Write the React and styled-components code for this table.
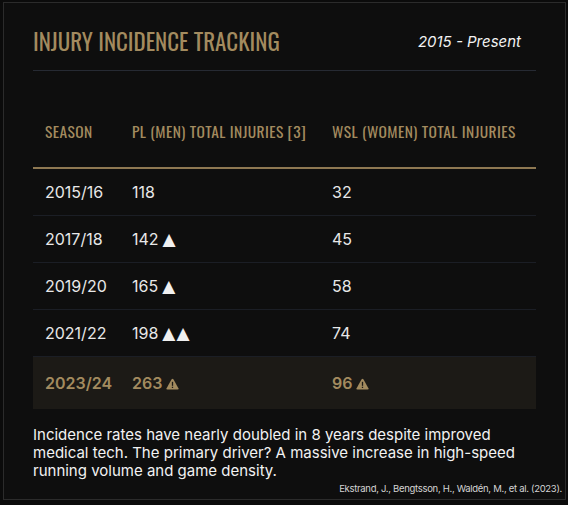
import React from "react";
import styled, { createGlobalStyle } from "styled-components";

const Global = createGlobalStyle`
  html, body { margin: 0; padding: 0; background: #0b0b0b; }
  body { font-family: Inter, "Noto Sans", sans-serif; }
`;

const Card = styled.section`
  box-sizing: border-box;
  width: 563px;
  height: 498px;
  margin: 2px 0 0 3px;
  background: #0e0e0e;
  border: 1px solid #2b2b2b;
  padding: 21px 29px 0 29px;
  display: flex;
  flex-direction: column;
`;

const Header = styled.header`
  display: flex;
  justify-content: space-between;
  align-items: center;
  padding: 0 15px 12px 0;
  border-bottom: 1px solid #262a33;
`;

const Title = styled.h2`
  margin: 0;
  font-family: Oswald, "Liberation Sans Narrow", sans-serif;
  font-weight: 400;
  font-size: 23px;
  line-height: 34px;
  color: #a38b5f;
  text-transform: uppercase;
`;

const Range = styled.span`
  font-family: Inter, sans-serif;
  font-style: italic;
  font-size: 15px;
  color: #f2f2f2;
`;

const Table = styled.table`
  width: 100%;
  margin-top: 24px;
  border-collapse: collapse;
  table-layout: fixed;
`;

const Th = styled.th`
  box-sizing: border-box;
  text-align: left;
  font-family: Oswald, "Liberation Sans Narrow", sans-serif;
  font-weight: 400;
  font-size: 15.5px;
  line-height: 22px;
  letter-spacing: 0.4px;
  color: #a38b5f;
  padding: 25px 12px 25px;
  border-bottom: 2px solid #8e7852;
  white-space: nowrap;
  width: ${(p) => (p.$w ? `${p.$w}px` : "auto")};
`;

const Tr = styled.tr`
  background: ${(p) => (p.$hl ? "#1c1a16" : "transparent")};
  border-bottom: 1px solid ${(p) => (p.$hl ? "transparent" : "#1b1e25")};
`;

const Td = styled.td`
  padding: 0 12px;
  height: ${(p) => (p.$hl ? 51 : 46)}px;
  font-size: 16px;
  color: ${(p) => (p.$hl ? "#a38b5f" : "#e8e8e8")};
  font-weight: ${(p) => (p.$hl ? 600 : 400)};
  white-space: nowrap;
`;

const Arrow = styled.span`
  font-family: "DejaVu Sans", sans-serif;
  font-size: 17px;
  margin-left: 4px;
  letter-spacing: 1px;
  color: #f0f0f0;
`;

const Warn = styled.svg`
  width: 13px;
  height: 12px;
  margin-left: 4px;
  vertical-align: -1px;
`;

const Note = styled.p`
  margin: 17px 0 0 0;
  font-size: 15px;
  line-height: 18px;
  color: #f2f2f2;
`;

const Cite = styled.p`
  margin: 3px -26px 0 0;
  text-align: right;
  font-size: 9.5px;
  letter-spacing: -0.3px;
  line-height: 12px;
  color: #d4d4d4;
`;

const WarnIcon = () => (
  <Warn viewBox="0 0 13 12">
    <path d="M5.6 1.3 Q6.5 0 7.4 1.3 L12.4 10.3 Q13 11.5 11.6 11.5 H1.4 Q0 11.5 0.6 10.3 Z" fill="#a38b5f" />
    <rect x="5.85" y="3.8" width="1.3" height="4" fill="#1c1a16" />
    <rect x="5.85" y="8.7" width="1.3" height="1.3" fill="#1c1a16" />
  </Warn>
);

const rows = [
  ["2015/16", "118", "", "32"],
  ["2017/18", "142", "▲", "45"],
  ["2019/20", "165", "▲", "58"],
  ["2021/22", "198", "▲▲", "74"],
];

export default function App() {
  return (
    <>
      <Global />
      <Card>
        <Header>
          <Title>Injury Incidence Tracking</Title>
          <Range>2015 - Present</Range>
        </Header>
        <Table>
          <thead>
            <tr>
              <Th $w={87}>SEASON</Th>
              <Th $w={200}>PL (MEN) TOTAL INJURIES [3]</Th>
              <Th>WSL (WOMEN) TOTAL INJURIES</Th>
            </tr>
          </thead>
          <tbody>
            {rows.map(([s, m, a, w]) => (
              <Tr key={s}>
                <Td>{s}</Td>
                <Td>
                  {m}
                  {a && <Arrow>{a}</Arrow>}
                </Td>
                <Td>{w}</Td>
              </Tr>
            ))}
            <Tr $hl>
              <Td $hl>2023/24</Td>
              <Td $hl>
                263
                <WarnIcon />
              </Td>
              <Td $hl>
                96
                <WarnIcon />
              </Td>
            </Tr>
          </tbody>
        </Table>
        <Note>
          Incidence rates have nearly doubled in 8 years despite improved medical tech. The primary driver? A massive
          increase in high-speed running volume and game density.
        </Note>
        <Cite>Ekstrand, J., Bengtsson, H., Waldén, M., et al. (2023).</Cite>
      </Card>
    </>
  );
}
